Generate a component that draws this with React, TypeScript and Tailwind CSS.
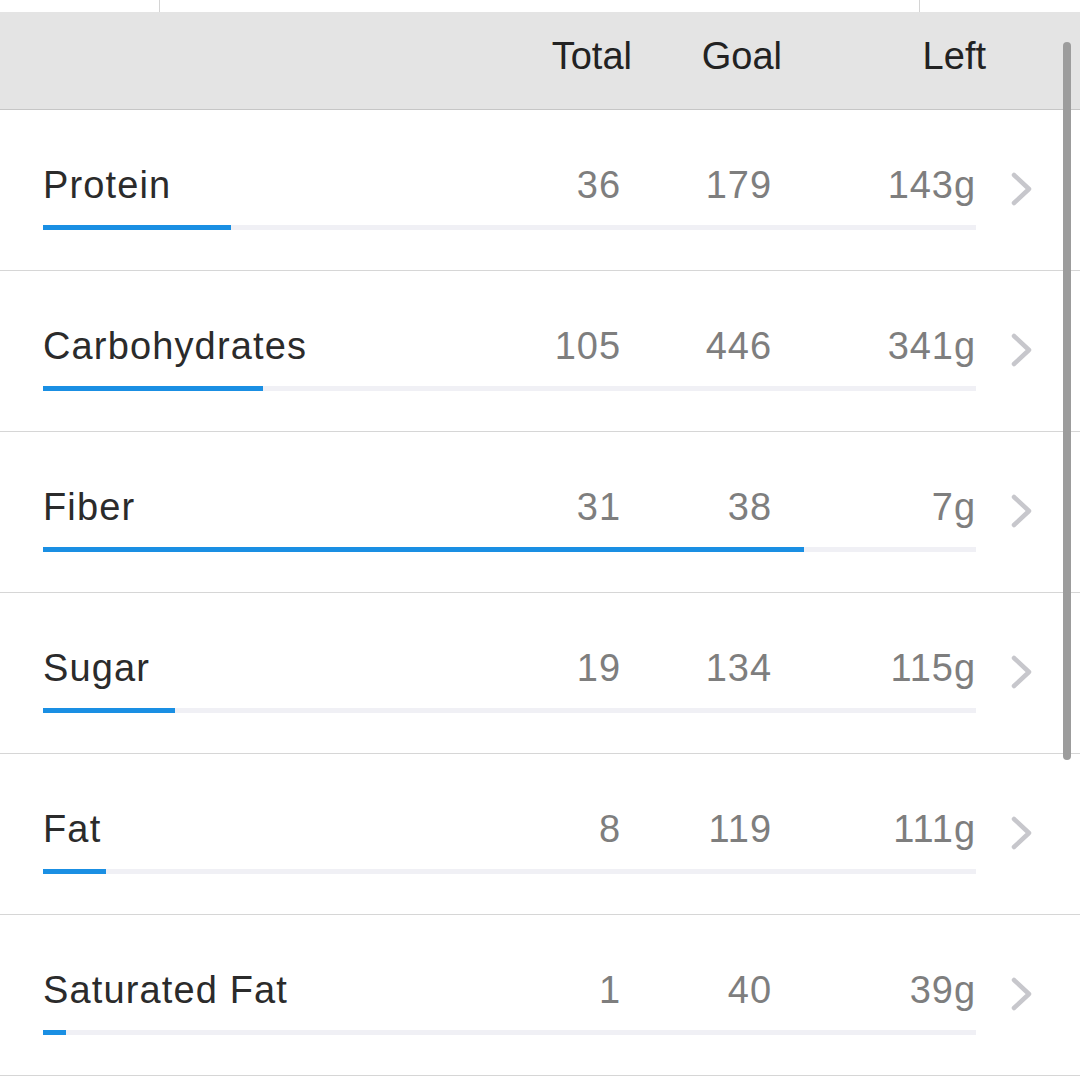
import React from 'react';

interface Nutrient {
  name: string;
  total: number;
  goal: number;
}

const nutrients: Nutrient[] = [
  { name: 'Protein', total: 36, goal: 179 },
  { name: 'Carbohydrates', total: 105, goal: 446 },
  { name: 'Fiber', total: 31, goal: 38 },
  { name: 'Sugar', total: 19, goal: 134 },
  { name: 'Fat', total: 8, goal: 119 },
  { name: 'Saturated Fat', total: 1, goal: 40 },
];

const font = "font-['Liberation_Sans','Helvetica_Neue',Arial,sans-serif]";

const Chevron = () => (
  <svg width="24" height="34" viewBox="0 0 24 34" fill="none">
    <path d="M4 3 L19 17 L4 31" stroke="#c7c7cc" strokeWidth="4.5" strokeLinecap="round" strokeLinejoin="round" />
  </svg>
);

const NutrientRow: React.FC<{ item: Nutrient }> = ({ item }) => {
  const pct = Math.min(100, (item.total / item.goal) * 100);
  const left = item.goal - item.total;

  return (
    <div className="h-[161px] border-b border-[#d6d6d6] flex items-start pl-[43px]">
      <div className="w-[933px] pt-[53px]">
        <div className="flex items-baseline text-[38px] leading-[44px]">
          <span className="flex-1 text-[#2b2b2b] tracking-[0.03em]">{item.name}</span>
          <span className="w-[120px] text-right text-[#7e7e7e] tracking-[0.025em] pr-[1px]">{item.total}</span>
          <span className="w-[150px] text-right text-[#7e7e7e] tracking-[0.025em]">{item.goal}</span>
          <span className="w-[204px] text-right text-[#7e7e7e] tracking-[0.025em]">{left}g</span>
        </div>
        <div className="mt-[18px] h-[5px] bg-[#f0f0f5]">
          <div className="h-full bg-[#1a8fe3]" style={{ width: `${pct}%` }} />
        </div>
      </div>
      <div className="ml-[34px] pt-[62px]">
        <Chevron />
      </div>
    </div>
  );
};

export default function App() {
  return (
    <div className={`relative w-[1080px] h-[1080px] overflow-hidden bg-white ${font}`}>
      {/* top strip of the view above */}
      <div className="h-[12px] flex">
        <div className="w-[160px] border-r border-[#d4d4d4]" />
        <div className="w-[760px] border-r border-[#d4d4d4]" />
      </div>

      {/* column header */}
      <div className="h-[98px] bg-[#e4e4e4] border-b border-[#c6c6c6] flex justify-end pr-[94px] pt-[22px]">
        <div className="flex items-start text-[38px] leading-[44px] text-[#222]">
          <span className="w-[120px] text-right">Total</span>
          <span className="w-[150px] text-right">Goal</span>
          <span className="w-[204px] text-right">Left</span>
        </div>
      </div>

      {nutrients.map((n) => (
        <NutrientRow key={n.name} item={n} />
      ))}

      {/* scroll indicator */}
      <div className="absolute left-[1063px] top-[42px] w-[8px] h-[718px] rounded-full bg-[#9c9c9c]" />
    </div>
  );
}
